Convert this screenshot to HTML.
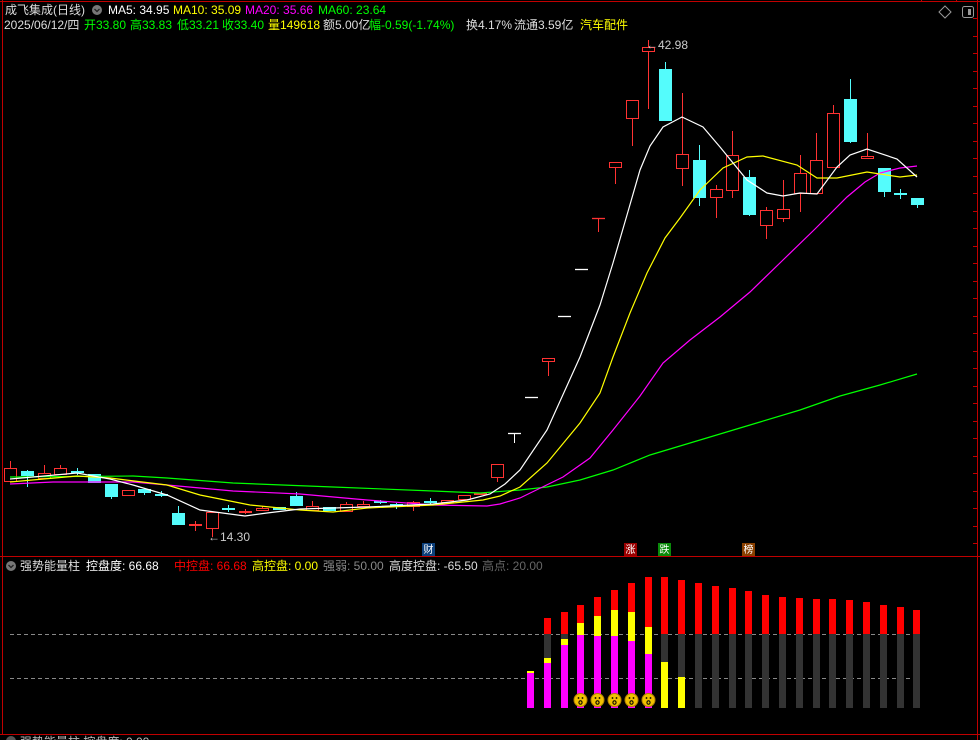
<!DOCTYPE html>
<html><head><meta charset="utf-8">
<style>
html,body{margin:0;padding:0;background:#000;width:980px;height:740px;overflow:hidden}
body{position:relative;font-family:"Liberation Sans","Noto Sans CJK SC",sans-serif;font-size:12px}
.t{position:absolute;white-space:nowrap;line-height:14px}
svg{position:absolute;left:0;top:0}
</style></head><body>
<svg id="s" width="980" height="740" xmlns="http://www.w3.org/2000/svg">
<g stroke="#c00000" stroke-width="1" fill="none">
<line x1="2.5" y1="0" x2="2.5" y2="735"/>
<line x1="0" y1="1.5" x2="980" y2="1.5"/>
<line x1="921.5" y1="0" x2="921.5" y2="2"/>
<line x1="956.5" y1="0" x2="956.5" y2="2"/>
<line x1="977.5" y1="0" x2="977.5" y2="740"/>
<line x1="0" y1="556.5" x2="980" y2="556.5"/>
<line x1="0" y1="734.5" x2="980" y2="734.5"/>
</g>
<g id="ticks" stroke="#c00000"></g>
<g stroke="#888" stroke-dasharray="4,3"><line x1="10" y1="634.5" x2="917" y2="634.5"/><line x1="10" y1="678.5" x2="917" y2="678.5"/></g>
<g id="c"></g>
<g fill="none" stroke-width="1.2">
<polyline stroke="#00ff00" points="10,477 133,476 167,478 233,483 333,487 433,491 480,493 520,490 547,487 580,480 613,470 650,455 680,446 720,434 760,422 800,410 840,396 880,385 917,374"/>
<polyline stroke="#ff00ff" points="10,484 53,482 100,482 133,482 167,485 233,491 300,494 367,500 433,505 487,506 500,504 520,498 563,477 590,458 613,430 640,396 663,363 690,340 720,317 750,292 783,260 815,229 847,197 865,182 880,173 900,168 917,166"/>
<polyline stroke="#ffff00" points="10,482 77,476 110,478 167,485 200,495 250,505 300,510 333,512 367,508 433,505 483,500 500,496 520,487 547,463 580,423 600,393 613,357 630,313 647,273 665,238 680,218 700,190 723,168 747,157 763,156 797,165 817,178 837,178 867,172 900,177 917,175"/>
<polyline stroke="#ffffff" points="10,479 33,477 77,473 110,479 133,485 167,495 200,510 245,516 267,513 300,509 367,507 433,504 467,500 490,494 505,484 520,470 547,430 580,357 600,305 613,263 627,215 640,170 650,146 663,127 682,117 703,127 720,147 747,180 767,193 783,196 800,193 817,194 837,167 850,155 867,149 897,159 917,177"/>
</g>
<g id="b"></g>
<g font-family="Liberation Sans,sans-serif" font-size="10" text-anchor="middle">
<rect x="422" y="543" width="13" height="13" fill="#0c3f7a"/><text x="428.5" y="553" fill="#fff" font-family="Noto Sans CJK SC">财</text>
<rect x="624" y="543" width="13" height="13" fill="#9a0000"/><text x="630.5" y="553" fill="#fff" font-family="Noto Sans CJK SC">涨</text>
<rect x="658" y="543" width="13" height="13" fill="#0a8a0a"/><text x="664.5" y="553" fill="#fff" font-family="Noto Sans CJK SC">跌</text>
<rect x="742" y="543" width="13" height="13" fill="#8a4000"/><text x="748.5" y="553" fill="#fff" font-family="Noto Sans CJK SC">榜</text>
</g>
<g fill="none" stroke="#999"><path d="M945 6 L951 12 L945 18 L939 12Z"/><rect x="962.5" y="6.5" width="11" height="11" rx="2"/><rect x="968" y="9" width="3" height="6" fill="#999" stroke="none"/></g>
<circle cx="97" cy="10" r="5" fill="#777"/><path d="M94.5 9 L97 11.5 L99.5 9" stroke="#222" fill="none" stroke-width="1.3"/>
<circle cx="11" cy="566" r="5" fill="#777"/><path d="M8.5 565 L11 567.5 L13.5 565" stroke="#222" fill="none" stroke-width="1.3"/>
<circle cx="11" cy="741" r="5" fill="#555"/>
<text x="208" y="541" fill="#ccc" font-size="12" font-family="Liberation Sans,sans-serif">←14.30</text>
<text x="646" y="49" fill="#ccc" font-size="12" font-family="Liberation Sans,sans-serif">←42.98</text>
</svg>
<div class="t" style="left:5px;top:3px;color:#ddd">成飞集成(日线)</div>
<div class="t" style="left:108px;top:3px;color:#fff">MA5: 34.95</div>
<div class="t" style="left:173px;top:3px;color:#ff0">MA10: 35.09</div>
<div class="t" style="left:245px;top:3px;color:#f0f">MA20: 35.66</div>
<div class="t" style="left:318px;top:3px;color:#0f0">MA60: 23.64</div>
<div class="t" style="left:4px;top:18px;color:#ddd">2025/06/12/四</div>
<div class="t" style="left:84px;top:18px;color:#0f0">开33.80</div>
<div class="t" style="left:130px;top:18px;color:#0f0">高33.83</div>
<div class="t" style="left:177px;top:18px;color:#0f0">低33.21</div>
<div class="t" style="left:222px;top:18px;color:#0f0">收33.40</div>
<div class="t" style="left:268px;top:18px;color:#ff0">量149618</div>
<div class="t" style="left:323px;top:18px;color:#ddd">额5.00亿</div>
<div class="t" style="left:369px;top:18px;color:#0f0">幅-0.59(-1.74%)</div>
<div class="t" style="left:466px;top:18px;color:#ddd">换4.17%</div>
<div class="t" style="left:514px;top:18px;color:#ddd">流通3.59亿</div>
<div class="t" style="left:580px;top:18px;color:#ff0">汽车配件</div>
<div class="t" style="left:20px;top:559px;color:#ddd">强势能量柱</div>
<div class="t" style="left:86px;top:559px;color:#fff">控盘度: 66.68</div>
<div class="t" style="left:174px;top:559px;color:#f00">中控盘: 66.68</div>
<div class="t" style="left:252px;top:559px;color:#ff0">高控盘: 0.00</div>
<div class="t" style="left:323px;top:559px;color:#888">强弱: 50.00</div>
<div class="t" style="left:389px;top:559px;color:#ddd">高度控盘: -65.50</div>
<div class="t" style="left:482px;top:559px;color:#666">高点: 20.00</div>
<div class="t" style="left:20px;top:735px;color:#bbb">强势能量柱 控盘度: 0.00</div>
<script>
var NS="http://www.w3.org/2000/svg";
function el(p,n,a){var e=document.createElementNS(NS,n);for(var k in a)e.setAttribute(k,a[k]);p.appendChild(e);return e;}
var tk=document.getElementById('ticks');
for(var y=18;y<556;y+=17.5){el(tk,'line',{x1:973,y1:Math.round(y)+.5,x2:978,y2:Math.round(y)+.5});}
var C=document.getElementById('c');
var R="#ff3232",CY="#54fcfc";
var d=[
[0,'r',468,482,461,482],[1,'c',471,476,470,487],[2,'r',473,479,465,479],[3,'r',468,475,465,475],[4,'c',471,473,468,475],
[5,'c',474,483,474,483],[6,'c',484,497,484,499],[7,'r',490,496,490,496],[8,'c',489,493,489,495],[9,'c',494,495,491,497],
[10,'c',513,525,506,525],[11,'rf',524,526,521,531],[12,'r',512,529,512,537],[13,'c',508,510,505,512],[14,'rf',511,513,509,514],
[15,'r',508,511,506,511],[16,'c',507,510,507,510],[17,'c',496,506,492,506],[18,'r',506,511,501,511],[19,'c',507,511,507,511],
[20,'r',504,512,502,512],[21,'r',504,507,501,507],[22,'c',501,503,500,504],[23,'c',504,506,503,509],[24,'r',502,507,501,511],
[25,'c',501,503,498,504],[26,'r',500,503,500,503],[27,'r',495,500,495,500],[28,'rf',493,495,493,495],[29,'r',464,478,464,482],
[30,'wt',433,433,433,443],[31,'wd',397,397,397,397],[32,'r',358,362,358,376],[33,'wd',316,316,316,316],[34,'wd',269,269,269,269],
[35,'rt',218,218,218,232],[36,'r',162,168,162,184],[37,'r',100,119,100,146],[38,'r',47,52,40,109],[39,'c',69,121,62,121],
[40,'r',154,169,93,186],[41,'c',160,198,145,206],[42,'r',189,198,185,218],[43,'r',155,191,131,198],[44,'c',177,215,170,216],
[45,'r',210,226,207,239],[46,'r',209,219,180,222],[47,'r',173,194,155,212],[48,'r',160,194,133,194],[49,'r',113,168,105,168],
[50,'c',99,142,79,143],[51,'r',156,159,133,159],[52,'c',168,192,168,197],[53,'c',193,195,189,199],[54,'c',198,205,198,208]];
d.forEach(function(a){var x=Math.round(10+16.8*a[0]),t=a[1],top=a[2],bot=a[3];
 var col=(t[0]=='c')?CY:(t[0]=='w'?'#fff':R);
 if(a[4]<top)el(C,'line',{x1:x+.5,y1:a[4],x2:x+.5,y2:top,stroke:col});
 if(a[5]>bot)el(C,'line',{x1:x+.5,y1:bot,x2:x+.5,y2:a[5],stroke:col});
 if(t=='wd'||t=='wt'||t=='rt'){el(C,'line',{x1:x-6,y1:top+.5,x2:x+7,y2:top+.5,stroke:col,'stroke-width':1.3});return;}
 if(t=='c'){if(bot-top<2){el(C,'rect',{x:x-6,y:top,width:13,height:2,fill:col});}else el(C,'rect',{x:x-6,y:top,width:13,height:bot-top,fill:col});}
 else if(t=='rf'){el(C,'rect',{x:x-6,y:top,width:13,height:Math.max(2,bot-top),fill:col});}
 else el(C,'rect',{x:x-5.5,y:top+.5,width:12,height:Math.max(1,bot-top-1),fill:'#000',stroke:col});
});
var B=document.getElementById('b');
var rt=[null,618,612,605,597,590,583,577,577,580,583,586,588,591,595,597,598,599,599,600,602,605,607,610];
var segs={
0:[[671,673,'#ff0'],[673,708,'#f0f']],
1:[[618,634,'#f00'],[634,658,'#333'],[658,663,'#ff0'],[663,708,'#f0f']],
2:[[612,634,'#f00'],[634,639,'#333'],[639,645,'#ff0'],[645,708,'#f0f']],
3:[[605,623,'#f00'],[623,635,'#ff0'],[635,708,'#f0f']],
4:[[597,616,'#f00'],[616,636,'#ff0'],[636,708,'#f0f']],
5:[[590,610,'#f00'],[610,636,'#ff0'],[636,708,'#f0f']],
6:[[583,612,'#f00'],[612,641,'#ff0'],[641,708,'#f0f']],
7:[[577,627,'#f00'],[627,654,'#ff0'],[654,708,'#f0f']],
8:[[577,634,'#f00'],[634,662,'#333'],[662,708,'#ff0']],
9:[[580,634,'#f00'],[634,677,'#333'],[677,708,'#ff0']]};
for(var i=0;i<24;i++){var x=Math.round(527+16.8*i);var s=segs[i]||[[rt[i],634,'#f00'],[634,708,'#333']];
 s.forEach(function(g){el(B,'rect',{x:x,y:g[0],width:7,height:g[1]-g[0],fill:g[2]});});}
for(var i=3;i<8;i++){var cx=Math.round(527+16.8*i)+3.5;
 el(B,'circle',{cx:cx,cy:700,r:6.5,fill:'#f0c000',stroke:'#b08000'});
 el(B,'circle',{cx:cx-2,cy:698,r:0.9,fill:'#000'});el(B,'circle',{cx:cx+2,cy:698,r:0.9,fill:'#000'});
 el(B,'ellipse',{cx:cx,cy:702.5,rx:1.6,ry:1.8,fill:'none',stroke:'#000','stroke-width':1});}
</script>
</body></html>
